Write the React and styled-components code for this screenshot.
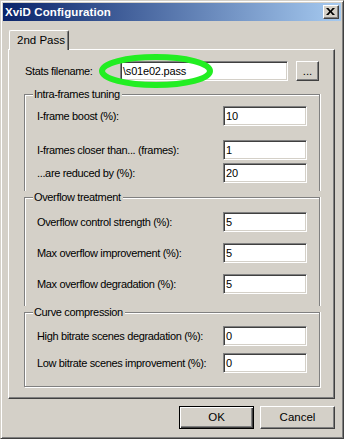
import React from "react";
import styled, { createGlobalStyle } from "styled-components";

const Global = createGlobalStyle`
  html, body { margin: 0; padding: 0; background: #d4d0c8; }
  body { font-family: "Liberation Sans", Arial, sans-serif; font-size: 11px; color: #000; }
  * { box-sizing: border-box; }
`;

const Window = styled.div`
  position: relative;
  width: 344px;
  height: 439px;
  background: #d4d0c8;
  border: 1px solid;
  border-color: #d4d0c8 #404040 #404040 #d4d0c8;
  box-shadow: inset 1px 1px 0 #fff, inset -1px -1px 0 #808080;
  padding: 2px;
  display: flex;
  flex-direction: column;
`;

const TitleBar = styled.div`
  height: 18px;
  display: flex;
  align-items: center;
  justify-content: space-between;
  padding: 0 2px 0 2px;
  background: linear-gradient(to right, #0a246a, #a6caf0);
`;

const Title = styled.span`
  color: #fff;
  font-weight: bold;
  font-size: 11.5px;
  letter-spacing: 0.1px;
`;

const CloseBtn = styled.div`
  width: 16px;
  height: 14px;
  background: #d4d0c8;
  border: 1px solid;
  border-color: #fff #404040 #404040 #fff;
  box-shadow: inset -1px -1px 0 #808080;
  display: flex;
  align-items: center;
  justify-content: center;
  padding: 0 1px 1px 0;
`;

const Body = styled.div`
  padding: 9px 6px 0 5px;
  display: flex;
  flex-direction: column;
`;

const TabStrip = styled.div`
  display: flex;
  padding-left: 1px;
  height: 19px;
  position: relative;
  z-index: 1;
`;

const Tab = styled.div`
  width: 60px;
  height: 20px;
  background: #d4d0c8;
  border-top: 1px solid #fff;
  border-left: 1px solid #fff;
  border-right: 1px solid #404040;
  box-shadow: inset -1px 0 0 #808080;
  border-radius: 2px 2px 0 0;
  padding: 2px 0 0 7px;
  line-height: 14px;
  font-size: 11.5px;
`;

const Panel = styled.div`
  width: 327px;
  height: 350px;
  border: 1px solid;
  border-color: #fff #404040 #404040 #fff;
  box-shadow: inset -1px -1px 0 #808080;
  padding: 11px 0 0 15px;
  display: flex;
  flex-direction: column;
`;

const StatsRow = styled.div`
  display: flex;
  align-items: center;
  padding-left: 1px;
  height: 20px;
`;

const Label = styled.span`
  width: ${(p) => p.$w || 96}px;
  flex: none;
  letter-spacing: -0.35px;
  white-space: nowrap;
`;

const TextBox = styled.div`
  width: ${(p) => p.$w}px;
  height: 20px;
  background: #fff;
  border: 1px solid;
  border-color: #808080 #fff #fff #808080;
  box-shadow: inset 1px 1px 0 #404040, inset -1px -1px 0 #d4d0c8;
  padding: 0 2px;
  display: flex;
  align-items: center;
  font-size: 11px;
  letter-spacing: -0.2px;
  white-space: nowrap;
  overflow: hidden;
`;

const Button = styled.div`
  width: ${(p) => p.$w}px;
  height: ${(p) => p.$h}px;
  margin-left: ${(p) => p.$ml || 0}px;
  background: #d4d0c8;
  border: 1px solid;
  border-color: ${(p) =>
    p.$default ? "#000" : "#fff #404040 #404040 #fff"};
  box-shadow: ${(p) =>
    p.$default
      ? "inset 1px 1px 0 #fff, inset -1px -1px 0 #404040, inset -2px -2px 0 #808080"
      : "inset -1px -1px 0 #808080"};
  display: flex;
  align-items: center;
  justify-content: center;
  font-size: 11.5px;
  padding-bottom: 1px;
`;

const Groups = styled.div`
  margin-top: 7px;
  width: 296px;
  display: flex;
  flex-direction: column;
`;

const GroupHead = styled.div`
  height: 13px;
  display: flex;
  &::before,
  &::after {
    content: "";
    margin-top: 6px;
    height: 7px;
    border-top: 1px solid #808080;
    box-shadow: inset 0 1px 0 #fff;
  }
  &::before {
    width: 8px;
    border-left: 1px solid #808080;
    box-shadow: inset 1px 1px 0 #fff;
  }
  &::after {
    flex: 1;
    border-right: 1px solid #808080;
    box-shadow: inset 0 1px 0 #fff, 1px 0 0 #fff;
  }
`;

const GroupTitle = styled.span`
  padding: 0 2px 0 1px;
  line-height: 12px;
  letter-spacing: -0.35px;
`;

const GroupBody = styled.div`
  border-left: 1px solid #808080;
  border-right: 1px solid #808080;
  border-bottom: ${(p) => (p.$last ? "1px solid #808080" : "none")};
  box-shadow: ${(p) =>
    p.$last
      ? "inset 1px 0 0 #fff, 1px 1px 0 #fff"
      : "inset 1px 0 0 #fff, 1px 0 0 #fff"};
  padding: ${(p) => p.$pad};
  display: flex;
  flex-direction: column;
`;

const Row = styled.div`
  display: flex;
  align-items: center;
  height: 20px;
  padding-left: 12px;
  margin-top: ${(p) => p.$mt || 0}px;
`;

const ButtonRow = styled.div`
  display: flex;
  justify-content: flex-end;
  width: 327px;
  margin-top: 7px;
`;

const Overlay = styled.svg`
  position: absolute;
  left: 0;
  top: 0;
  pointer-events: none;
`;

function Field({ label, value, mt }) {
  return (
    <Row $mt={mt}>
      <Label $w={186}>{label}</Label>
      <TextBox $w={84}>{value}</TextBox>
    </Row>
  );
}

function Group({ title, pad, last, children }) {
  return (
    <>
      <GroupHead>
        <GroupTitle>{title}</GroupTitle>
      </GroupHead>
      <GroupBody $pad={pad} $last={last}>
        {children}
      </GroupBody>
    </>
  );
}

export default function App() {
  return (
    <>
      <Global />
      <Window>
        <TitleBar>
          <Title>XviD Configuration</Title>
          <CloseBtn>
            <svg width="9" height="7" viewBox="0 0 9 7">
              <path
                d="M0 0h2.4l2.1 2.4L6.6 0H9L5.7 3.5 9 7H6.6L4.5 4.6 2.4 7H0l3.3-3.5z"
                fill="#000"
              />
            </svg>
          </CloseBtn>
        </TitleBar>
        <Body>
          <TabStrip>
            <Tab>2nd Pass</Tab>
          </TabStrip>
          <Panel>
            <StatsRow>
              <Label $w={95}>Stats filename:</Label>
              <TextBox $w={168}>\s01e02.pass</TextBox>
              <Button $w={23} $h={20} $ml={8}>
                ...
              </Button>
            </StatsRow>
            <Groups>
              <Group title="Intra-frames tuning" pad="5px 0 8px">
                <Field label="I-frame boost (%):" value="10" />
                <Field label="I-frames closer than... (frames):" value="1" mt={14} />
                <Field label="...are reduced by (%):" value="20" mt={3} />
              </Group>
              <Group title="Overflow treatment" pad="8px 0 12px">
                <Field label="Overflow control strength (%):" value="5" />
                <Field label="Max overflow improvement (%):" value="5" mt={11} />
                <Field label="Max overflow degradation (%):" value="5" mt={11} />
              </Group>
              <Group title="Curve compression" pad="7px 0 13px" last>
                <Field label="High bitrate scenes degradation (%):" value="0" />
                <Field label="Low bitrate scenes improvement (%):" value="0" mt={7} />
              </Group>
            </Groups>
          </Panel>
          <ButtonRow>
            <Button $w={75} $h={23} $default>
              OK
            </Button>
            <Button $w={75} $h={23} $ml={6}>
              Cancel
            </Button>
          </ButtonRow>
        </Body>
        <Overlay width="344" height="439">
          <ellipse
            cx="155"
            cy="70"
            rx="54"
            ry="14"
            fill="none"
            stroke="#22ee22"
            strokeWidth="6"
          />
        </Overlay>
      </Window>
    </>
  );
}
